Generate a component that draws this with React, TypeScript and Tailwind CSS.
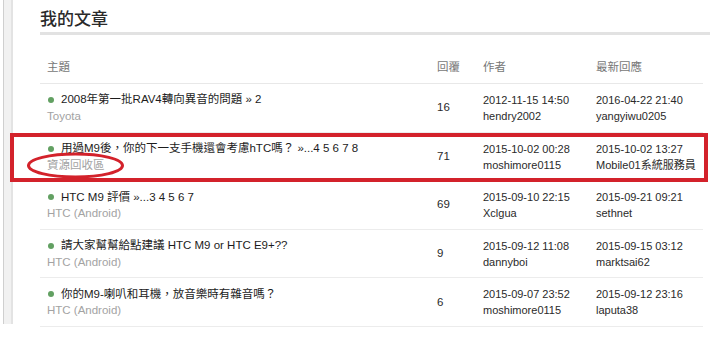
const rows = [
  {
    title: "2008年第一批RAV4轉向異音的問題 » 2",
    forum: "Toyota",
    replies: "16",
    created: "2012-11-15 14:50",
    author: "hendry2002",
    lastAt: "2016-04-22 21:40",
    lastBy: "yangyiwu0205",
  },
  {
    title: "用過M9後，你的下一支手機還會考慮hTC嗎？ »...4 5 6 7 8",
    forum: "資源回收區",
    replies: "71",
    created: "2015-10-02 00:28",
    author: "moshimore0115",
    lastAt: "2015-10-02 13:27",
    lastBy: "Mobile01系統服務員",
  },
  {
    title: "HTC M9 評價 »...3 4 5 6 7",
    forum: "HTC (Android)",
    replies: "69",
    created: "2015-09-10 22:15",
    author: "Xclgua",
    lastAt: "2015-09-21 09:21",
    lastBy: "sethnet",
  },
  {
    title: "請大家幫幫給點建議 HTC M9 or HTC E9+??",
    forum: "HTC (Android)",
    replies: "9",
    created: "2015-09-12 11:08",
    author: "dannyboi",
    lastAt: "2015-09-15 03:12",
    lastBy: "marktsai62",
  },
  {
    title: "你的M9-喇叭和耳機，放音樂時有雜音嗎？",
    forum: "HTC (Android)",
    replies: "6",
    created: "2015-09-07 23:52",
    author: "moshimore0115",
    lastAt: "2015-09-12 23:16",
    lastBy: "laputa38",
  },
]

const font = "font-['Liberation_Sans','Noto_Sans_CJK_TC',sans-serif]"

export default function App() {
  return (
      <div className={`relative w-[720px] h-[348px] bg-white ${font} overflow-hidden`}>
        <div className="flex items-start">
          {/* side rail */}
          <div className="ml-[3px] h-[324px] w-[10px] border-l border-[#cfcfcf] border-r-2 border-r-[#e3e3e3] bg-[#f1f1f1]" />

          <div className="pl-[27px] w-[697px]">
            <h2 className="pt-[6px] h-[32px] text-[17px] leading-[24px] font-medium text-[#2a2a2a] font-['Noto_Sans_CJK_TC',serif]">
              我的文章
            </h2>
            <div className="h-[3px] w-[670px] bg-[#e2e2e2]" />

            <div className="w-[663px]">
              <div className="mt-[17px] h-[32px] flex items-center border-b border-[#e8e8e8] text-[11.5px] text-[#777]">
                <div className="w-[390px] pl-[7px]">主題</div>
                <div className="w-[46px] pl-[7px]">回覆</div>
                <div className="w-[113px] pl-[7px]">作者</div>
                <div className="w-[114px] pl-[7px]">最新回應</div>
              </div>

              {rows.map((r) => (
                  <div key={r.title} className="h-[48.6px] flex border-b border-[#ececec]">
                    <div className="w-[390px] pl-[7px] pt-[8px]">
                      <div className="flex items-center h-[16px] text-[11.5px] text-[#1c1c1c] whitespace-nowrap">
                        <span className="ml-[1px] mr-[7px] w-[6px] h-[6px] rounded-full bg-[#62a062]" />
                        {r.title}
                      </div>
                      <div className="h-[17px] leading-[17px] text-[11.5px] text-[#a3a3a3]">{r.forum}</div>
                    </div>
                    <div className="w-[46px] pl-[7px] flex items-center text-[11.5px] text-[#2a2a2a]">
                      {r.replies}
                    </div>
                    <div className="w-[113px] pl-[7px] pt-[8px] text-[11px] text-[#2a2a2a]">
                      <div className="h-[16px] leading-[16px]">{r.created}</div>
                      <div className="h-[17px] leading-[17px]">{r.author}</div>
                    </div>
                    <div className="w-[114px] pl-[7px] pt-[8px] text-[11px] text-[#2a2a2a] whitespace-nowrap">
                      <div className="h-[16px] leading-[16px]">{r.lastAt}</div>
                      <div className="h-[17px] leading-[17px]">{r.lastBy}</div>
                    </div>
                  </div>
              ))}
            </div>
          </div>
        </div>

        {/* red highlight around the second topic */}
        <div className="absolute left-[10px] top-[133px] w-[698px] h-[49px] border-4 border-[#d3222b] pointer-events-none" />
        <svg className="absolute left-0 top-0 pointer-events-none" width="720" height="348">
          <ellipse cx="75.5" cy="165.5" rx="47" ry="11.5" fill="none" stroke="#d3222b" strokeWidth="3" />
        </svg>
      </div>
  )
}
